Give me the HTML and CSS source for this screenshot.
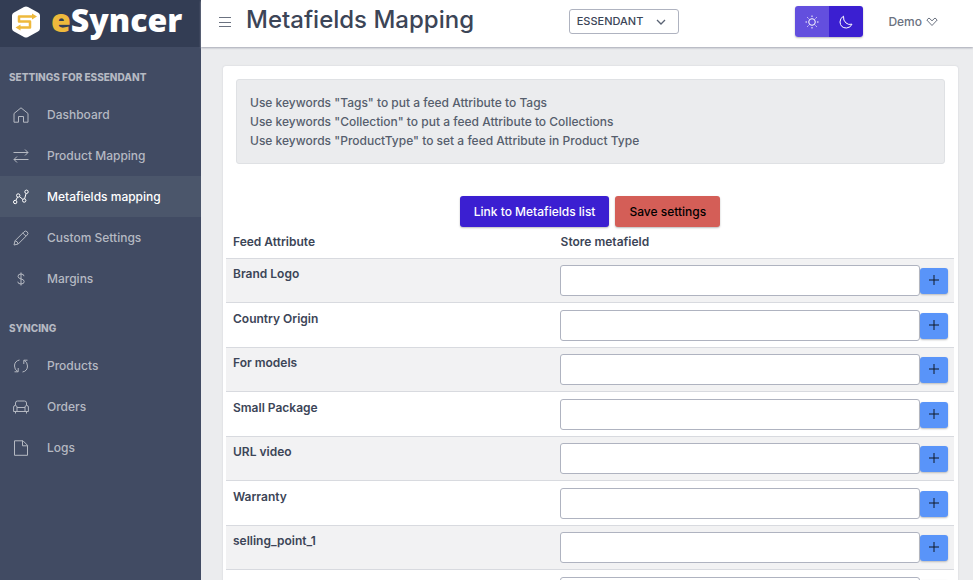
FILE: index.html
```html
<!DOCTYPE html>
<html lang="en">
<head>
    <meta charset="UTF-8">
    <meta name="viewport" content="width=device-width, initial-scale=1.0">
    <title>eSyncer - Metafields Mapping</title>
    <link rel="stylesheet" href="styles.css">
</head>
<body>
<div class="layout">
    <aside class="sidebar">
        <a class="brand" href="#">
            <svg class="brand-mark" viewBox="0 0 30 32" aria-hidden="true">
                <path d="M13 1Q15 0 17 1L27 6.500Q29 7.500 29 9.500V22.500Q29 24.500 27 25.500L17 31Q15 32 13 31L3 25.500Q1 24.500 1 22.500V9.500Q1 7.500 3 6.500L13 1Z" fill="#fff"/>
                <path d="M22 10.500H8V15.500H19V21.500H8" fill="none" stroke="#eeb93c" stroke-width="2.500" stroke-linejoin="round"/>
                <path d="M21 7.500L26 10.500L21 13.500ZM9.500 18.500L4.500 21.500L9.500 24.500Z" fill="#eeb93c"/>
            </svg>
            <span class="brand-name"><span class="brand-e">e</span>Syncer</span>
        </a>
        <nav class="menu">
            <h2 class="menu-title">Settings for Essendant</h2>
            <a class="menu-item" href="#">
                <svg class="icon" viewBox="0 0 16 16"><path d="M1 6.500L8 .8L15 6.500V15.200H10.500V9.500H5.500V15.200H1Z"/></svg>
                Dashboard
            </a>
            <a class="menu-item" href="#">
                <svg class="icon" viewBox="0 0 16 16"><path d="M.5 4.500H15M12 1.500L15 4.500L12 7.500M15.500 11.500H1M4 8.500L1 11.500L4 14.500"/></svg>
                Product Mapping
            </a>
            <a class="menu-item active" href="#">
                <svg class="icon" viewBox="0 0 16 16"><circle cx="2.200" cy="13" r="1.700"/><circle cx="5.200" cy="6.500" r="1.700"/><circle cx="11.200" cy="11.500" r="1.700"/><circle cx="13.500" cy="2.800" r="1.700"/><path d="M2.900 11.400L4.500 8.100M6.500 7.600L9.900 10.400M11.600 9.800L13.100 4.500"/></svg>
                Metafields mapping
            </a>
            <a class="menu-item" href="#">
                <svg class="icon" viewBox="0 0 16 16"><path d="M1 15L2 10.800L11 1.800Q12.600 .2 14.200 1.800Q15.800 3.400 14.200 5L5.200 14ZM9.800 3L13 6.200M2 10.800Q4.800 11.200 5.200 14"/></svg>
                Custom Settings
            </a>
            <a class="menu-item" href="#">
                <svg class="icon" viewBox="0 0 16 16"><path d="M11 5.200Q11 3 8 3Q5 3 5 5.300Q5 7.300 8 7.900Q11.200 8.500 11.200 10.600Q11.200 13 8 13Q4.800 13 4.800 10.700M8 1.500V14.500"/></svg>
                Margins
            </a>
            <h2 class="menu-title">Syncing</h2>
            <a class="menu-item" href="#">
                <svg class="icon" viewBox="0 0 16 16"><path d="M6.500 2Q1.500 3 1.500 8Q1.500 12 4.800 13.500M1.500 13.800H5.200V10M9.500 14Q14.500 13 14.500 8Q14.500 4 11.200 2.500M14.500 2.200H10.800V6"/></svg>
                Products
            </a>
            <a class="menu-item" href="#">
                <svg class="icon" viewBox="0 0 16 16"><path d="M2.500 6V4Q2.500 2 4.500 2H11.500Q13.500 2 13.500 4V6M4 8.500H12M4 12.500V8Q4 6.500 2.200 6.500Q.6 6.500 .6 8V12.500H15.400V8Q15.400 6.500 13.800 6.500Q12 6.500 12 8V12.500M2.500 12.500V14.500M13.500 12.500V14.500"/></svg>
                Orders
            </a>
            <a class="menu-item" href="#">
                <svg class="icon" viewBox="0 0 16 16"><path d="M1.500 .8H10L14.500 5.300V15.300H1.500ZM9.500 .8V5.800H14.500"/></svg>
                Logs
            </a>
        </nav>
    </aside>

    <div class="page">
        <header class="topbar">
            <button class="menu-toggle" type="button" aria-label="Toggle menu">
                <svg class="icon-small" viewBox="0 0 12 12"><path d="M0 1.500H12M0 6.500H12M0 10.500H12"/></svg>
            </button>
            <h1 class="title">Metafields Mapping</h1>
            <div class="feed-select">
                <select class="select" aria-label="Feed">
                    <option>ESSENDANT</option>
                </select>
            </div>
            <div class="theme-switch">
                <button class="theme-btn" type="button" aria-label="Light theme">
                    <svg class="icon-theme" viewBox="0 0 14 14"><circle cx="7" cy="7" r="3.300"/><path d="M7 .5V2M7 12V13.500M.5 7H2M12 7H13.500M2.400 2.400L3.400 3.400M10.600 10.600L11.600 11.600M2.400 11.600L3.400 10.600M10.600 3.400L11.600 2.400"/></svg>
                </button>
                <button class="theme-btn selected" type="button" aria-label="Dark theme">
                    <svg class="icon-theme" viewBox="0 0 14 14"><path d="M4.500 1.200Q1 3 1 7Q1.500 13 7.500 13Q11.500 12.800 13 9.200Q9.500 10.200 7 8Q4 5.500 4.500 1.200Z"/></svg>
                </button>
            </div>
            <a class="user" href="#">
                Demo
                <svg class="icon-small" viewBox="0 0 12 12"><path d="M.8 4L3 2L6 4.800L9 2L11.200 4L6 9.500Z"/></svg>
            </a>
        </header>

        <main class="content">
            <section class="card">
                <div class="hint">
                    Use keywords "Tags" to put a feed Attribute to Tags<br>
                    Use keywords "Collection" to put a feed Attribute to Collections<br>
                    Use keywords "ProductType" to set a feed Attribute in Product Type
                </div>
                <div class="actions">
                    <button class="btn btn-primary" type="button">Link to Metafields list</button>
                    <button class="btn btn-danger" type="button">Save settings</button>
                </div>
                <table class="mapping">
                    <thead>
                    <tr>
                        <th class="col-name" scope="col">Feed Attribute</th>
                        <th scope="col">Store metafield</th>
                    </tr>
                    </thead>
                    <tbody>
                    <tr>
                        <th scope="row"><label for="f1">Brand Logo</label></th>
                        <td><div class="field"><input class="input" type="text" id="f1"><button class="add" type="button" aria-label="Add"><svg class="plus" viewBox="0 0 10 10"><path d="M5 0V10M0 5H10"/></svg></button></div></td>
                    </tr>
                    <tr>
                        <th scope="row"><label for="f2">Country Origin</label></th>
                        <td><div class="field"><input class="input" type="text" id="f2"><button class="add" type="button" aria-label="Add"><svg class="plus" viewBox="0 0 10 10"><path d="M5 0V10M0 5H10"/></svg></button></div></td>
                    </tr>
                    <tr>
                        <th scope="row"><label for="f3">For models</label></th>
                        <td><div class="field"><input class="input" type="text" id="f3"><button class="add" type="button" aria-label="Add"><svg class="plus" viewBox="0 0 10 10"><path d="M5 0V10M0 5H10"/></svg></button></div></td>
                    </tr>
                    <tr>
                        <th scope="row"><label for="f4">Small Package</label></th>
                        <td><div class="field"><input class="input" type="text" id="f4"><button class="add" type="button" aria-label="Add"><svg class="plus" viewBox="0 0 10 10"><path d="M5 0V10M0 5H10"/></svg></button></div></td>
                    </tr>
                    <tr>
                        <th scope="row"><label for="f5">URL video</label></th>
                        <td><div class="field"><input class="input" type="text" id="f5"><button class="add" type="button" aria-label="Add"><svg class="plus" viewBox="0 0 10 10"><path d="M5 0V10M0 5H10"/></svg></button></div></td>
                    </tr>
                    <tr>
                        <th scope="row"><label for="f6">Warranty</label></th>
                        <td><div class="field"><input class="input" type="text" id="f6"><button class="add" type="button" aria-label="Add"><svg class="plus" viewBox="0 0 10 10"><path d="M5 0V10M0 5H10"/></svg></button></div></td>
                    </tr>
                    <tr>
                        <th scope="row"><label for="f7">selling_point_1</label></th>
                        <td><div class="field"><input class="input" type="text" id="f7"><button class="add" type="button" aria-label="Add"><svg class="plus" viewBox="0 0 10 10"><path d="M5 0V10M0 5H10"/></svg></button></div></td>
                    </tr>
                    <tr>
                        <th scope="row"></th>
                        <td><div class="field"><input class="input" type="text" aria-label="Store metafield"><button class="add" type="button" aria-label="Add"><svg class="plus" viewBox="0 0 10 10"><path d="M5 0V10M0 5H10"/></svg></button></div></td>
                    </tr>
                    </tbody>
                </table>
            </section>
        </main>
    </div>
</div>
</body>
</html>
```

FILE: styles.css
```css
* {
    box-sizing: border-box;
}
body {
    margin: 0;
    font-family: Inter, "Liberation Sans", sans-serif;
    font-size: 12px;
    font-weight: 500;
    line-height: 19px;
    color: #3c4557;
    background: #ebecee;
}
button, input, select {
    font: inherit;
}
a {
    color: inherit;
    text-decoration: none;
}
svg {
    display: block;
    fill: none;
    stroke: currentColor;
    stroke-width: 1;
}
.layout {
    display: flex;
    height: 100vh;
}

/* sidebar */
.sidebar {
    flex: 0 0 201px;
    background: #414b63;
    color: #b5b9c2;
}
.brand {
    display: flex;
    align-items: center;
    gap: 10px;
    height: 47px;
    padding: 0 11px 4px;
    background: #333d54;
}
.brand-mark {
    width: 30px;
    height: 32px;
    stroke: none;
}
.brand-name {
    padding-bottom: 4px;
    font-family: "Open Sans", "Noto Sans", sans-serif;
    font-size: 32px;
    font-weight: 800;
    line-height: 38px;
    color: #fff;
}
.brand-e {
    color: #eeb93c;
}
.menu {
    display: flex;
    flex-direction: column;
    padding-top: 13px;
}
.menu-title {
    margin: 0;
    padding: 9px;
    font-size: 10px;
    font-weight: 800;
    line-height: 16px;
    text-transform: uppercase;
}
.menu-item + .menu-title {
    margin-top: 12px;
}
.menu-item {
    display: flex;
    align-items: center;
    gap: 18px;
    height: 41px;
    padding: 0 13px;
}
.menu-item.active {
    background: #4b566b;
    color: #fff;
}
.icon {
    width: 16px;
    height: 16px;
}

/* top bar */
.page {
    flex: 1;
    min-width: 0;
    display: flex;
    flex-direction: column;
}
.topbar {
    display: flex;
    align-items: center;
    height: 47px;
    padding: 0 35px 4px 18px;
    background: #fff;
    box-shadow: 0 1px 2px #a5a7b3;
    z-index: 1;
}
.menu-toggle {
    padding: 0;
    border: 0;
    background: none;
    color: #6b7280;
}
.icon-small {
    width: 12px;
    height: 12px;
}
.title {
    margin: 0 0 4px 15px;
    font-size: 24px;
    font-weight: 500;
    line-height: 30px;
}
.feed-select {
    flex: 1;
    display: flex;
    justify-content: center;
    padding-right: 22px;
}
.select {
    appearance: none;
    width: 110px;
    height: 25px;
    padding: 0 7px;
    border: 1px solid #afb3c0;
    border-radius: 3px;
    background: #fff url("data:image/svg+xml,%3Csvg xmlns='http://www.w3.org/2000/svg' viewBox='0 0 10 10' fill='none' stroke='%23596273' stroke-width='1.300'%3E%3Cpath d='M1 3l4 4 4-4'/%3E%3C/svg%3E") no-repeat right 12px center / 10px 10px;
    color: #3c4557;
    font-size: 11px;
}
.theme-switch {
    display: flex;
    border-radius: 3px;
    overflow: hidden;
    box-shadow: 0 1px 2px #bbb;
}
.theme-btn {
    display: flex;
    align-items: center;
    justify-content: center;
    width: 34px;
    height: 31px;
    padding: 0;
    border: 0;
    background: #634fde;
    color: #fff;
}
.theme-btn.selected {
    background: #3b1fd1;
}
.icon-theme {
    width: 14px;
    height: 14px;
}
.user {
    display: flex;
    align-items: center;
    gap: 4px;
    margin-left: 25px;
    color: #6b7280;
}

/* content */
.content {
    flex: 1;
    min-height: 0;
    padding: 19px 15px 0 22px;
    overflow-y: auto;
    scrollbar-width: none;
}
.card {
    padding: 13px 4px 13px 3px;
    border-radius: 3px;
    background: #fff;
    box-shadow: 0 0 2px #ccced4;
}
.hint {
    margin: 0 9px 0 10px;
    padding: 13px;
    border: 1px solid #dfe1e4;
    border-radius: 3px;
    background: #ebecee;
    color: #565e6d;
}
.actions {
    display: flex;
    justify-content: center;
    gap: 6px;
    margin-top: 32px;
}
.btn {
    height: 31px;
    padding: 0 14px;
    border: 0;
    border-radius: 3px;
    box-shadow: 0 1px 2px #bbb;
}
.btn-primary {
    background: #3b1fd1;
    color: #fff;
}
.btn-danger {
    background: #d45e57;
    color: #000;
}
.mapping {
    width: 100%;
    border-collapse: separate;
    border-spacing: 0;
}
.mapping th {
    padding: 5px 7px;
    font-weight: 600;
    text-align: left;
    vertical-align: top;
}
.mapping thead th {
    padding-bottom: 7px;
}
.mapping .col-name {
    width: 45%;
}
.mapping tbody th,
.mapping tbody td {
    border-top: 1px solid #d8dadf;
}
.mapping td {
    padding: 6px;
}
.mapping tr:nth-child(even) td {
    padding-top: 7px;
}
.mapping tr:nth-child(even) th {
    padding-top: 6px;
}
.mapping tbody tr:nth-child(odd) {
    background: #f2f2f3;
}
.field {
    display: flex;
    align-items: center;
}
.input {
    flex: 1;
    min-width: 0;
    height: 31px;
    padding: 0 8px;
    border: 1px solid #afb3c0;
    border-radius: 3px;
    background: #fff;
}
.add {
    display: flex;
    justify-content: center;
    width: 28px;
    height: 26px;
    padding: 7px 0;
    border: 0;
    border-radius: 3px;
    background: #5994f9;
    color: #111827;
    box-shadow: 0 1px 2px #bbb;
}
.plus {
    width: 10px;
    height: 10px;
}
```
